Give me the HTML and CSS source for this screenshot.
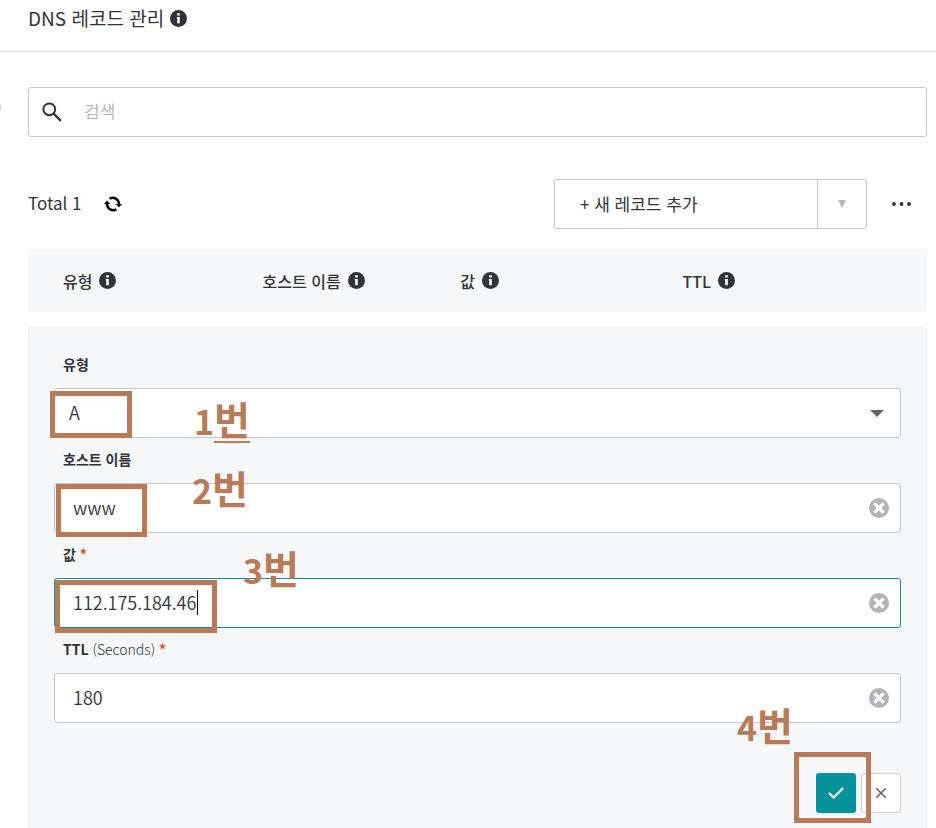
FILE: index.html
```html
<!DOCTYPE html>
<html lang="ko">
<head>
<meta charset="utf-8">
<meta name="viewport" content="width=device-width, initial-scale=1">
<title>DNS 레코드 관리</title>
<link rel="stylesheet" href="styles.css">
</head>
<body>
<svg class="defs" aria-hidden="true">
  <symbol id="info" viewBox="0 0 17 17"><circle cx="8.500" cy="8.500" r="8.500" fill="#303439"/><path d="M7.200 3.300h2.600v2.200H7.200zM6.800 7H9.800v6.300H7.200V8.200h-.4z" fill="#fff"/></symbol>
  <symbol id="clear" viewBox="0 0 20 20"><circle cx="10" cy="10" r="10" fill="#b0b4b8"/><path d="M5.400 5.400l9.200 9.200M14.600 5.400l-9.200 9.200" stroke="#fff" stroke-width="3.400"/></symbol>
</svg>
<header class="page-header">
  <h1>DNS 레코드 관리</h1>
  <svg class="info"><use href="#info"/></svg>
</header>
<span class="edge-handle"></span>
<main class="content">
  <div class="search">
    <svg class="search-icon" viewBox="0 0 20 20"><circle cx="7.300" cy="7.300" r="5.900" fill="none" stroke="#303439" stroke-width="2"/><path d="M11.500 11.500l7.300 7.300" stroke="#303439" stroke-width="2.400"/></svg>
    <input type="search" placeholder="검색" aria-label="검색">
  </div>

  <div class="toolbar">
    <span class="total">Total 1</span>
    <button class="refresh" type="button" aria-label="새로고침">
      <svg viewBox="0 0 18 16"><g fill="none" stroke="#000" stroke-width="2.400"><path d="M5.600 2.600A6.300 6.300 0 0 1 15 8"/><path d="M12.400 13.400A6.300 6.300 0 0 1 3 8"/></g><path d="M11.800 8h6.200L14.900 11.500zM0 8h6.200L3.100 4.500z"/></svg>
    </button>
    <div class="split">
      <button class="add" type="button">+ 새 레코드 추가</button>
      <button class="add-menu" type="button" aria-label="레코드 추가 메뉴"><svg viewBox="0 0 8 8"><path d="M0 0h8L4 8z" fill="#b5b5c5"/></svg></button>
    </div>
    <button class="more" type="button" aria-label="더 보기"><svg viewBox="0 0 20 4"><g fill="#303439"><circle cx="2" cy="2" r="1.900"/><circle cx="9.500" cy="2" r="1.900"/><circle cx="17" cy="2" r="1.900"/></g></svg></button>
  </div>

  <table class="columns">
    <thead>
      <tr>
        <th class="col-type"><span>유형 <svg class="info"><use href="#info"/></svg></span></th>
        <th class="col-host"><span>호스트 이름 <svg class="info"><use href="#info"/></svg></span></th>
        <th class="col-value"><span>값 <svg class="info"><use href="#info"/></svg></span></th>
        <th><span>TTL <svg class="info"><use href="#info"/></svg></span></th>
      </tr>
    </thead>
  </table>

  <form class="record">
    <label for="type">유형</label>
    <div class="field">
      <select id="type"><option>A</option></select>
      <svg class="arrow" viewBox="0 0 14 7"><path d="M0 0h14L7 7z" fill="#666"/></svg>
      <span class="mark mark-type"></span>
      <span class="step step-1">1<u>번</u></span>
    </div>
    <label for="host">호스트 이름</label>
    <div class="field">
      <input id="host" type="text" value="www">
      <button class="clear" type="button" aria-label="지우기"><svg><use href="#clear"/></svg></button>
      <span class="mark mark-host"></span>
      <span class="step step-2">2<b>번</b></span>
    </div>
    <label for="value">값 <i>*</i></label>
    <div class="field">
      <input id="value" class="active" type="text" value="112.175.184.46" required>
      <button class="clear" type="button" aria-label="지우기"><svg><use href="#clear"/></svg></button>
      <span class="caret"></span>
      <span class="mark mark-value"></span>
      <span class="step step-3">3<b>번</b></span>
    </div>
    <label for="ttl">TTL <small>(Seconds)</small> <i>*</i></label>
    <div class="field">
      <input id="ttl" type="text" value="180" required>
      <button class="clear" type="button" aria-label="지우기"><svg><use href="#clear"/></svg></button>
    </div>
    <div class="actions">
      <button class="confirm" type="button" aria-label="확인"><svg viewBox="0 0 16 12"><path d="M1 6l4.800 4.500L15 1" fill="none" stroke="#fff" stroke-width="2"/></svg></button>
      <button class="cancel" type="button" aria-label="취소"><svg viewBox="0 0 12 12"><path d="M1.200 1.200l9.600 9.600M10.800 1.200l-9.600 9.600" fill="none" stroke="#666" stroke-width="1.600"/></svg></button>
      <span class="mark mark-confirm"></span>
      <span class="step step-4">4<b>번</b></span>
    </div>
  </form>
</main>
</body>
</html>
```
FILE: styles.css
```css
* { box-sizing: border-box; }
body {
  margin: 0;
  background: #fff;
  color: #303439;
  font: 400 17px/24px "Noto Sans CJK KR", sans-serif;
  overflow-x: hidden;
}
button, input, select { font: inherit; color: inherit; }
button { padding: 0; border: 0; background: none; display: flex; align-items: center; justify-content: center; }
svg { display: block; }
.defs { position: absolute; width: 0; height: 0; }
.info { width: 17px; height: 17px; flex: none; }

.page-header {
  display: flex;
  align-items: center;
  gap: 6px;
  height: 52px;
  padding: 0 28px 15px;
  border-bottom: 1px solid #dfe1e4;
}
h1 { margin: 0; font-size: 19px; font-weight: 400; }
.edge-handle {
  position: absolute;
  top: 98px;
  left: -17px;
  width: 18px;
  height: 18px;
  border: 2px solid #bfd0dc;
  border-radius: 50%;
}
.content { padding: 35px 9px 0 28px; }

.search {
  display: flex;
  align-items: center;
  gap: 22px;
  height: 50px;
  padding: 0 13px;
  border: 1px solid #c0c8d3;
  border-radius: 3px;
}
.search-icon { width: 20px; height: 20px; flex: none; }
.search input { flex: 1; min-width: 0; padding: 0 0 2px; border: 0; outline: 0; background: none; font-weight: 350; }
.search input::placeholder { color: #b0b0b0; opacity: 1; }

.toolbar { display: flex; align-items: center; margin-top: 42px; }
.total { padding-bottom: 2px; }
.refresh { margin-left: 22px; }
.refresh svg { width: 18px; height: 16px; }
.split {
  display: flex;
  width: 313px;
  height: 50px;
  margin-left: auto;
  border: 1px solid #c0c8d3;
  border-radius: 3px;
}
.add { flex: 1; justify-content: flex-start; padding: 0 0 1px 25px; }
.add-menu { width: 49px; border-left: 1px solid #c0c8d3; }
.add-menu svg { width: 8px; height: 8px; }
.more { width: 60px; padding-left: 10px; }
.more svg { width: 20px; height: 4px; }

.columns {
  width: 100%;
  height: 63px;
  margin-top: 20px;
  table-layout: fixed;
  border-collapse: separate;
  border-spacing: 0;
  background: #f5f7f9;
  border-radius: 3px;
}
th { padding: 0 0 0 35px; font-size: 16px; font-weight: 500; text-align: left; }
th span { display: flex; align-items: center; gap: 7px; }
.col-type { width: 22.2%; }
.col-host { width: 22%; }
.col-value { width: 24.7%; }

.record {
  margin-top: 15px;
  padding: 15px 25px 20px;
  border: 1px solid #eff1f3;
  border-radius: 3px;
  background: #f5f7f9;
}
label {
  display: block;
  height: 45px;
  padding: 9px 9px 0;
  font-size: 14px;
  font-weight: 700;
}
label small { font-size: 14px; font-weight: 300; }
label i { color: #f0421c; font-style: normal; }
.field { position: relative; }
.field input, .field select {
  display: block;
  width: 100%;
  height: 50px;
  margin: 0;
  padding: 0 48px 3px 18px;
  border: 1px solid #c0c8d3;
  border-radius: 3px;
  outline: 0;
  background: #fff;
  font-size: 18px;
  font-weight: 350;
}
.field select { appearance: none; padding-left: 14px; }
.field .active { border-color: #06939b; }
.arrow { position: absolute; top: 22px; right: 17px; width: 14px; height: 7px; pointer-events: none; }
.clear { position: absolute; top: 15px; right: 12px; }
.clear svg { width: 20px; height: 20px; }
.caret { position: absolute; top: 12px; left: 143px; width: 1px; height: 25px; background: #000; }

.actions { position: relative; display: flex; justify-content: flex-end; gap: 5px; margin-top: 50px; }
.actions button { width: 40px; height: 40px; border-radius: 3px; }
.actions .confirm { background: #06939b; }
.confirm svg { width: 16px; height: 12px; }
.actions .cancel { border: 1px solid #d0d0d0; background: #fff; }
.cancel svg { width: 12px; height: 12px; }

/* Walkthrough overlay: boxes and step numbers */
.mark { position: absolute; z-index: 1; border: 5px solid #b97b57; pointer-events: none; }
.mark-type { top: 3px; left: -4px; width: 82px; height: 47px; }
.mark-host { top: 1px; left: 2px; width: 91px; height: 53px; }
.mark-value { top: 2px; left: 1px; width: 162px; height: 53px; }
.mark-confirm { top: -21px; right: 30px; width: 77px; height: 71px; }
.step {
  position: absolute;
  z-index: 1;
  color: #b97b57;
  font-size: 34px;
  font-weight: 700;
  line-height: 48px;
  white-space: nowrap;
  pointer-events: none;
}
.step b, .step u { font-size: 39px; font-weight: 700; }
.step u { text-decoration-thickness: 2px; text-underline-offset: 6px; }
.step-1 { top: 6px; left: 140px; }
.step-2 { top: -20px; left: 138px; }
.step-3 { top: -35px; left: 189px; }
.step-4 { top: -73px; right: 108px; }
```
